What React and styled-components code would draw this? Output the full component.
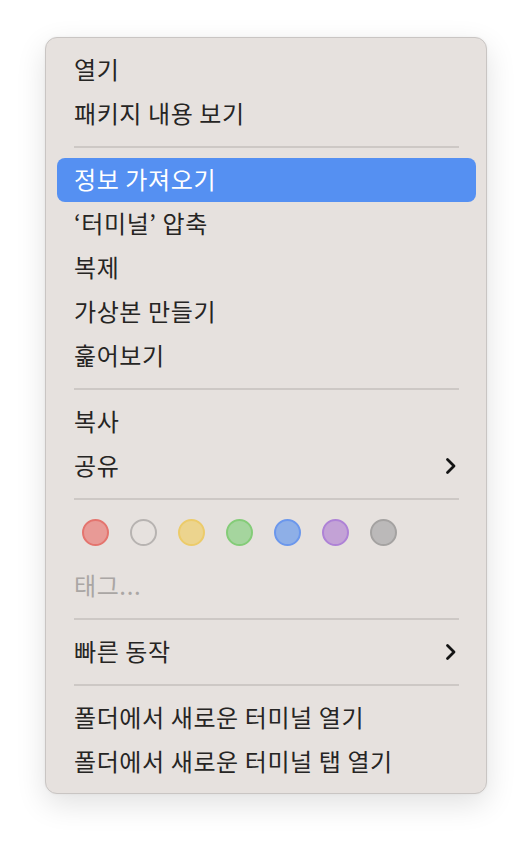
import React from 'react'
import styled, { createGlobalStyle } from 'styled-components'

const GlobalStyle = createGlobalStyle`
    body {
        margin: 0;
        background: #ffffff;
        font-family: "Noto Sans CJK KR", "Noto Sans", sans-serif;
    }
`

const tagColors = [
    { fill: '#e89a96', ring: '#e4746e' },
    { fill: 'transparent', ring: '#b7b3b1' },
    { fill: '#ecd48e', ring: '#eccb6a' },
    { fill: '#a5d59e', ring: '#84cc78' },
    { fill: '#8eafe7', ring: '#6b97ec' },
    { fill: '#c3a2d6', ring: '#ae82d6' },
    { fill: '#bbb9b9', ring: '#a4a2a1' },
]

export default function App() {
    return (
        <Page>
            <GlobalStyle />
            <Menu>
                <MenuItem title="열기" />
                <MenuItem title="패키지 내용 보기" />
                <Separator />
                <MenuItem title="정보 가져오기" selected />
                <MenuItem title="‘터미널’ 압축" />
                <MenuItem title="복제" />
                <MenuItem title="가상본 만들기" />
                <MenuItem title="훑어보기" />
                <Separator />
                <MenuItem title="복사" />
                <MenuItem title="공유" submenu />
                <Separator />
                <TagRow>
                    {tagColors.map((c, i) => (
                        <TagDot key={i} fill={c.fill} ring={c.ring} />
                    ))}
                </TagRow>
                <MenuItem title="태그..." disabled />
                <Separator />
                <MenuItem title="빠른 동작" submenu />
                <Separator />
                <MenuItem title="폴더에서 새로운 터미널 열기" />
                <MenuItem title="폴더에서 새로운 터미널 탭 열기" />
            </Menu>
        </Page>
    )
}

const MenuItem = ({ title, selected, disabled, submenu }) => {
    return (
        <Item selected={selected}>
            <Label selected={selected} disabled={disabled}>{title}</Label>
            {submenu && <Chevron />}
        </Item>
    )
}

const Chevron = () => (
    <ChevronSvg viewBox="0 0 12 18" width="12" height="18">
        <path d="M2.5 2.5 L9 9 L2.5 15.5" fill="none" stroke="#141414" strokeWidth="2.8" strokeLinecap="round" strokeLinejoin="round" />
    </ChevronSvg>
)

const Page = styled.div`
    width: 532px;
    height: 848px;
    padding: 37px 0 0 45px;
    box-sizing: border-box;
`

const Menu = styled.div`
    width: 442px;
    box-sizing: border-box;
    display: flex;
    flex-direction: column;
    padding: 10px 10px 9px 11px;
    background: #e6e1de;
    border: 1px solid #c9c5c3;
    border-radius: 12px;
    box-shadow: 0 10px 30px rgba(0, 0, 0, 0.12), 0 0 3px rgba(0, 0, 0, 0.05);
`

const Item = styled.div`
    height: 44px;
    display: flex;
    align-items: center;
    justify-content: space-between;
    padding: 0 19px 0 17px;
    border-radius: 8px;
    background: ${({ selected }) => selected ? '#5590f2' : 'transparent'};
`

const Label = styled.div`
    font-size: 24px;
    line-height: 1;
    letter-spacing: 0.6px;
    margin-top: -2px;
    color: ${({ selected, disabled }) => selected ? '#ffffff' : disabled ? '#aaa6a4' : '#262524'};
    white-space: nowrap;
`

const ChevronSvg = styled.svg`
    display: block;
`

const Separator = styled.div`
    height: 22px;
    margin: 0 17px;
    display: flex;
    align-items: center;

    &::after {
        content: "";
        flex: 1;
        height: 2px;
        background: #cdc8c5;
    }
`

const TagRow = styled.div`
    height: 54px;
    box-sizing: border-box;
    padding: 9px 0 0 25px;
    display: flex;
    gap: 21px;
`

const TagDot = styled.div`
    width: 27px;
    height: 27px;
    box-sizing: border-box;
    border-radius: 50%;
    background: ${({ fill }) => fill};
    border: 2px solid ${({ ring }) => ring};
`
